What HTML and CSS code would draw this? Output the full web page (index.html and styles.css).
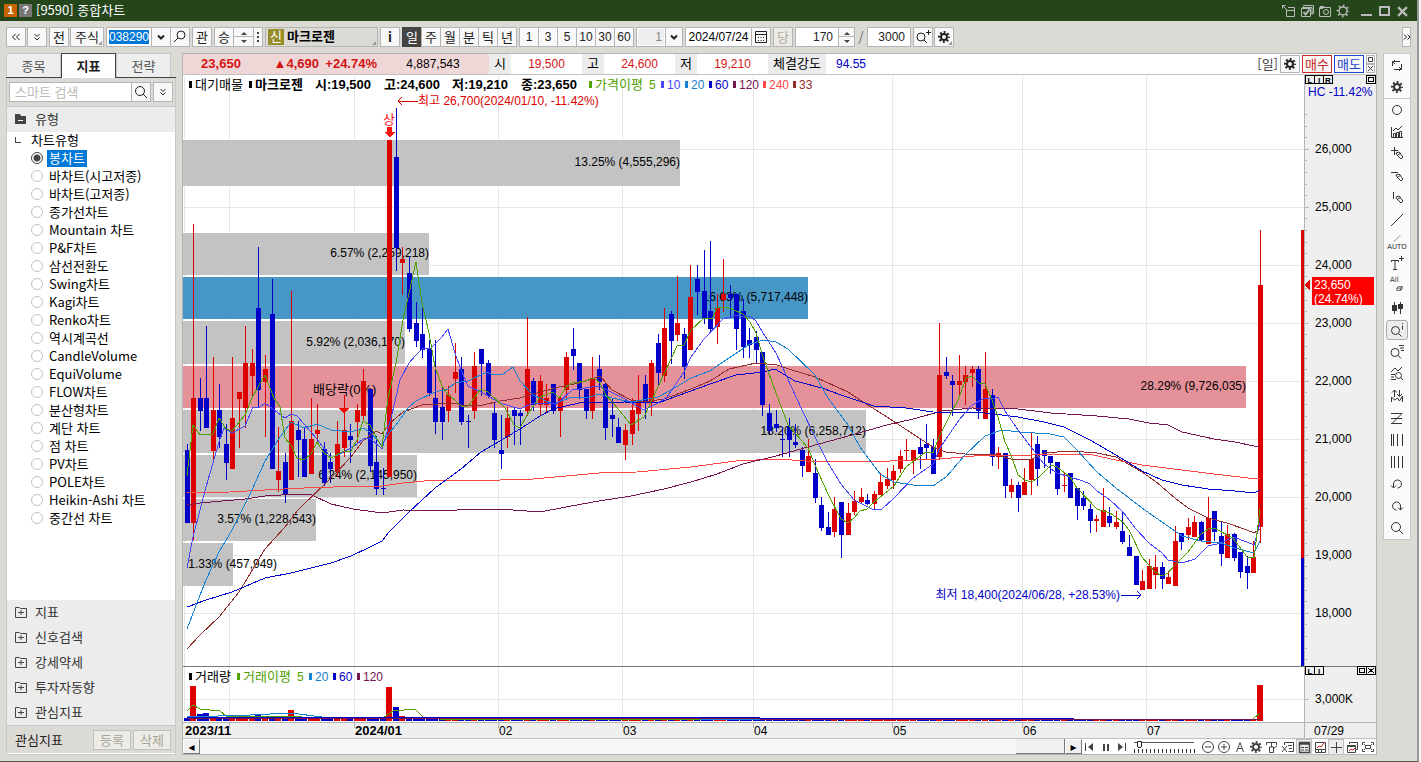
FILE: index.html
```html
<!DOCTYPE html>
<html lang="ko">
<head>
    <meta charset="UTF-8">
    <meta name="viewport" content="width=device-width, initial-scale=1.0">
    <title>[9590] 종합차트</title>
    <link rel="stylesheet" href="styles.css">
</head>
<body>
    <!-- 아이콘 -->
    <svg class="sprite" aria-hidden="true">
        <symbol id="gear" viewBox="0 0 16 16"><circle cx="8" cy="8" r="3" stroke-width="2"/><circle cx="8" cy="8" r="5" stroke-width="2" stroke-dasharray="1.96 1.967" stroke-dashoffset="1"/></symbol>
        <symbol id="gear-thin" viewBox="0 0 16 16"><circle cx="8" cy="8" r="4" stroke-width="1.500"/><circle cx="8" cy="8" r="5.500" stroke-width="2" stroke-dasharray="1.5 2.82" stroke-dashoffset=".75"/></symbol>
        <symbol id="find" viewBox="0 0 16 16"><circle cx="7" cy="7" r="4.500"/><path d="M10 10l4 4"/></symbol>
        <symbol id="find-left" viewBox="0 0 16 16"><circle cx="9" cy="6" r="4"/><path d="M6 9l-4 4"/></symbol>
        <symbol id="find-plus" viewBox="0 0 16 16"><circle cx="6" cy="8" r="4"/><path d="M9 11l3 3M13.500 1v5M11 3.500h5"/></symbol>
        <symbol id="down" viewBox="0 0 16 16"><path d="M5 6.500l3 3 3-3" stroke-width="2"/></symbol>
        <symbol id="dleft" viewBox="0 0 16 16"><path d="M7.500 5l-3 3 3 3M11.500 5l-3 3 3 3"/></symbol>
        <symbol id="dright" viewBox="0 0 16 16"><path d="M5 5.500l2.500 2.500L5 10.500M8.500 5.500L11 8l-2.500 2.500"/></symbol>
        <symbol id="ddown" viewBox="0 0 16 16"><path d="M5.500 5L8 7.500 10.500 5M5.500 8.500L8 11l2.500-2.500"/></symbol>
        <symbol id="calendar" viewBox="0 0 16 16"><path d="M2.500 2.500h11v11h-11zM2.500 5.500h11"/><path d="M5 8.500h7M5 11.500h7" stroke-dasharray="1 1.500"/></symbol>
        <symbol id="dock" viewBox="0 0 16 16"><path d="M5.500 6v7.500h8v-9H7M6 7.500h8M1.500 5.500v-3h3M2 3l4 4"/></symbol>
        <symbol id="windows" viewBox="0 0 16 16"><path d="M4.500 3.500v-1h10v8h-2M2.500 5.500h9v8h-9zM3 4.500h10v7"/><path d="M4.500 9l2 2.500 4-5" stroke-width="2"/></symbol>
        <symbol id="camera" viewBox="0 0 16 16"><path d="M2.500 4.500h11v9h-11zM3 3.500h4M3 5.500h3"/><circle cx="9" cy="9" r="2.500"/></symbol>
        <symbol id="folder-minus" viewBox="0 0 12 12"><path d="M0 1h5l1 2h5v8H0z" fill="currentColor" stroke="none"/><path d="M3 7.500h5" stroke="#fff"/></symbol>
        <symbol id="folder-plus" viewBox="0 0 12 12"><path d="M.5 1.500h4l1 1h6v9H.5zM3 6.500h6M6 4v5"/></symbol>
        <symbol id="refresh" viewBox="0 0 16 16"><path d="M3.500 9V4.500h7.500M4 5l2-2M4 5l2 2M12.500 7v5.500H5M12 12l-2-2M12 12l-2 2"/></symbol>
        <symbol id="circle" viewBox="0 0 16 16"><circle cx="8" cy="8" r="4.500"/></symbol>
        <symbol id="barline" viewBox="0 0 16 16"><path d="M2.500 3v10.500H14M4.500 13V9.500h2V13M7.500 13V8.500h2V13M10.500 13V7.500h2V13M4 7l3-3 2 2 4-4"/></symbol>
        <symbol id="pen-cross" viewBox="0 0 16 16"><path d="M5.500 1v8M2 4.500h7M7 7l3-1 4 5-2 2-4-4zM9 9l3-2"/></symbol>
        <symbol id="pen-h" viewBox="0 0 16 16"><path d="M2 4.500h7M7 7l3-1 4 5-2 2-4-4zM9 9l3-2"/></symbol>
        <symbol id="pen-v" viewBox="0 0 16 16"><path d="M4.500 2v7M7 7l3-1 4 5-2 2-4-4zM9 9l3-2"/></symbol>
        <symbol id="slash" viewBox="0 0 16 16"><path d="M2 14L14 2"/></symbol>
        <symbol id="text-plus" viewBox="0 0 16 16"><path d="M2.500 6V4.500h7V6M6 5v9M4 13.500h4M12.500 0v5M10 2.500h5"/></symbol>
        <symbol id="eraser" viewBox="0 0 16 16"><path d="M6.500 5.500l2-2h5v3l-2 2h-5zM6.500 5.500h5l2-2M11.500 5.500v3"/></symbol>
        <symbol id="candles" viewBox="0 0 16 16"><path d="M5.500 2v12M11.500 2v12"/><path d="M3 5h5v6H3zM9 4h5v5H9z" fill="currentColor" stroke="none"/></symbol>
        <symbol id="find-i" viewBox="0 0 16 16"><circle cx="6.500" cy="8.500" r="4"/><path d="M9.500 11.500l3 3M13.500 1v1M13.500 3.500v4"/></symbol>
        <symbol id="find-list" viewBox="0 0 16 16"><circle cx="6" cy="8.500" r="4"/><path d="M9 11.500l3 3M10 1.500h5M11 4h4M12 6.500h3"/></symbol>
        <symbol id="find-line" viewBox="0 0 16 16"><path d="M2 6l4-4 3 3 4-4M2 8.500h4M2 11h3M2 13.500h5"/><circle cx="9.500" cy="9.500" r="3"/><path d="M12 12l2 2"/></symbol>
        <symbol id="swap" viewBox="0 0 16 16"><path d="M5.500 9V2M3 4.500L5.500 2 8 4.500M10.500 2v6M8 6l2.500 2.500L13 6M2.500 14V9l3 3 3-2 2 3 3-5v6"/></symbol>
        <symbol id="zig" viewBox="0 0 16 16"><path d="M2 3.500h11M2 8.500h11M2 13.500h11M13 3.500L3 13.500"/></symbol>
        <symbol id="lines1" viewBox="0 0 16 16"><path d="M2.500 2v12M4.500 2v12M8.500 2v12M13.500 2v12"/></symbol>
        <symbol id="lines2" viewBox="0 0 16 16"><path d="M2.500 2v12M5.500 2v12M9.500 2v12M13.500 2v12"/></symbol>
        <symbol id="undo" viewBox="0 0 16 16"><path d="M4.500 11V8c0-2.500 2-4 4-4s4 1.500 4 4-2 4-4 4M2 9.500l2.500 2.500L7 9.500"/></symbol>
        <symbol id="redo" viewBox="0 0 16 16"><path d="M7.500 12c-2 0-4-1.500-4-4s2-4 4-4 4 1.500 4 4v4M9 9.500l2.500 2.500L14 9.500"/></symbol>
        <symbol id="first" viewBox="0 0 16 16"><path d="M3.500 4v8"/><path d="M11 4v8L6 8z" fill="currentColor" stroke="none"/></symbol>
        <symbol id="pause" viewBox="0 0 16 16"><path d="M6 5v7M10 5v7" stroke-width="2"/></symbol>
        <symbol id="last" viewBox="0 0 16 16"><path d="M11.500 4v8"/><path d="M4 4v8l5-4z" fill="currentColor" stroke="none"/></symbol>
        <symbol id="minus" viewBox="0 0 16 16"><circle cx="8" cy="8" r="5.500"/><path d="M5 8h6"/></symbol>
        <symbol id="plus" viewBox="0 0 16 16"><circle cx="8" cy="8" r="5.500"/><path d="M5 8h6M8 5v6"/></symbol>
        <symbol id="letter" viewBox="0 0 16 16"><path d="M4.500 13L8 3.500 11.500 13M6 9.500h4"/></symbol>
        <symbol id="tpaint" viewBox="0 0 16 16"><path d="M2.500 6V3.500h10V6M7.500 4v4M5.500 8h4v5.500h-4zM10 9l3-2"/></symbol>
        <symbol id="sheet-x" viewBox="0 0 16 16"><path d="M4.500 6V3.500h9v9h-5M8 6.500h4M9 9.500h3M2 7l5 6M7 7l-5 6"/></symbol>
        <symbol id="panel" viewBox="0 0 16 16"><path d="M3.500 3.500h10v10h-10zM4 5h9" stroke-width="1.500"/><path d="M5 8.500h3M5 11h3M9 8.500h3M9 11h3"/></symbol>
        <symbol id="trend" viewBox="0 0 16 16"><path d="M3.500 3.500h10v10h-10zM4 10.500h9M6.500 11v2M9.500 11v2"/><path d="M5 9l2-2 2 1 3-4" stroke="#c81e1e"/></symbol>
        <symbol id="cross" viewBox="0 0 16 16"><path d="M8.500 3v11M3 8.500h11"/></symbol>
        <symbol id="copy" viewBox="0 0 16 16"><path d="M5.500 5V3.500h8v7H12M3.500 6.500h8v7h-8zM4 7.500h7"/><path d="M5 12l2-2 2 1 2-2" stroke="#c81e1e"/></symbol>
        <symbol id="expand" viewBox="0 0 16 16"><path d="M2.500 6V3.500H5M11 3.500h2.500V6M13.500 10v2.500H11M5 12.500H2.500V10M4 5l1 1M12 5l-1 1M12 11l-1-1M4 11l1-1M5.500 6.500h5v3h-5z"/></symbol>
    </svg>

    <div class="window">
        <header class="titlebar">
            <span class="mark mark-one">1</span>
            <span class="mark mark-help">?</span>
            <h1>[9590] 종합차트</h1>
            <div class="window-tools">
                <svg class="ico"><use href="#dock"/></svg>
                <svg class="ico"><use href="#windows"/></svg>
                <svg class="ico"><use href="#camera"/></svg>
                <svg class="ico"><use href="#gear-thin"/></svg>
            </div>
            <div class="window-buttons">
                <button class="win-min" aria-label="최소화"></button>
                <button class="win-max" aria-label="최대화"></button>
                <button class="win-close" aria-label="닫기"><svg viewBox="0 0 10 10"><path d="M1 1l8 8M9 1L1 9"/></svg></button>
            </div>
        </header>

        <div class="toolbar">
            <div class="set">
                <button class="btn" aria-label="접기"><svg class="ico"><use href="#dleft"/></svg></button>
                <button class="btn" aria-label="더보기"><svg class="ico"><use href="#ddown"/></svg></button>
            </div>
            <div class="set">
                <button class="btn">전</button>
                <button class="btn wide corner">주식</button>
            </div>
            <div class="set joined">
                <div class="code-box"><input type="text" class="code" value="038290" aria-label="종목코드"></div>
                <button class="btn" aria-label="종목 목록"><svg class="ico"><use href="#down"/></svg></button>
                <button class="btn" aria-label="종목 찾기"><svg class="ico"><use href="#find-left"/></svg></button>
            </div>
            <button class="btn">관</button>
            <div class="set joined">
                <button class="btn">승</button>
                <button class="btn spin large" aria-label="위아래"></button>
                <button class="btn dots" aria-label="옵션"></button>
            </div>
            <div class="stock-name corner"><span>신</span><b>마크로젠</b></div>
            <button class="btn"><b>i</b></button>
            <div class="set joined">
                <button class="btn on">일</button>
                <button class="btn">주</button>
                <button class="btn">월</button>
                <button class="btn">분</button>
                <button class="btn">틱</button>
                <button class="btn">년</button>
            </div>
            <div class="set joined num">
                <button class="btn">1</button>
                <button class="btn">3</button>
                <button class="btn">5</button>
                <button class="btn">10</button>
                <button class="btn">30</button>
                <button class="btn">60</button>
            </div>
            <div class="set joined">
                <input type="text" class="field unit" value="1" aria-label="주기" disabled>
                <button class="btn slim" aria-label="주기 목록"><svg class="ico"><use href="#down"/></svg></button>
            </div>
            <div class="set joined">
                <input type="text" class="field date" value="2024/07/24" aria-label="날짜">
                <button class="btn" aria-label="달력"><svg class="ico"><use href="#calendar"/></svg></button>
            </div>
            <button class="btn off" disabled>당</button>
            <div class="set joined">
                <input type="text" class="field" value="170" aria-label="표시 개수">
                <button class="btn spin" aria-label="개수 조절"></button>
            </div>
            <span class="slash">/</span>
            <input type="text" class="field" value="3000" aria-label="전체 개수">
            <div class="set">
                <button class="btn" aria-label="확대"><svg class="ico"><use href="#find-plus"/></svg></button>
                <button class="btn corner" aria-label="설정"><svg class="ico"><use href="#gear"/></svg></button>
            </div>
            <button class="btn more" aria-label="도구 더보기"><svg class="ico"><use href="#dright"/></svg></button>
        </div>

        <div class="content">
            <aside class="side">
                <div class="tabs">
                    <button>종목</button>
                    <button class="active">지표</button>
                    <button>전략</button>
                </div>
                <div class="side-body">
                    <div class="search">
                        <input type="text" placeholder="스마트 검색" aria-label="스마트 검색">
                        <button class="btn" aria-label="검색"><svg class="ico"><use href="#find"/></svg></button>
                        <button class="btn gap" aria-label="펼치기"><svg class="ico"><use href="#ddown"/></svg></button>
                    </div>
                    <div class="fold first"><svg><use href="#folder-minus"/></svg>유형</div>
                    <div class="tree">
                        <div class="tree-root">차트유형</div>
                        <label><input type="radio" name="chart" checked><span>봉차트</span></label>
                        <label><input type="radio" name="chart"><span>바차트(시고저종)</span></label>
                        <label><input type="radio" name="chart"><span>바차트(고저종)</span></label>
                        <label><input type="radio" name="chart"><span>종가선차트</span></label>
                        <label><input type="radio" name="chart"><span>Mountain 차트</span></label>
                        <label><input type="radio" name="chart"><span>P&amp;F차트</span></label>
                        <label><input type="radio" name="chart"><span>삼선전환도</span></label>
                        <label><input type="radio" name="chart"><span>Swing차트</span></label>
                        <label><input type="radio" name="chart"><span>Kagi차트</span></label>
                        <label><input type="radio" name="chart"><span>Renko차트</span></label>
                        <label><input type="radio" name="chart"><span>역시계곡선</span></label>
                        <label><input type="radio" name="chart"><span>CandleVolume</span></label>
                        <label><input type="radio" name="chart"><span>EquiVolume</span></label>
                        <label><input type="radio" name="chart"><span>FLOW차트</span></label>
                        <label><input type="radio" name="chart"><span>분산형차트</span></label>
                        <label><input type="radio" name="chart"><span>계단 차트</span></label>
                        <label><input type="radio" name="chart"><span>점 차트</span></label>
                        <label><input type="radio" name="chart"><span>PV차트</span></label>
                        <label><input type="radio" name="chart"><span>POLE차트</span></label>
                        <label><input type="radio" name="chart"><span>Heikin-Ashi 차트</span></label>
                        <label><input type="radio" name="chart"><span>중간선 차트</span></label>
                    </div>
                    <div class="fold"><svg><use href="#folder-plus"/></svg>지표</div>
                    <div class="fold"><svg><use href="#folder-plus"/></svg>신호검색</div>
                    <div class="fold"><svg><use href="#folder-plus"/></svg>강세약세</div>
                    <div class="fold"><svg><use href="#folder-plus"/></svg>투자자동향</div>
                    <div class="fold"><svg><use href="#folder-plus"/></svg>관심지표</div>
                    <div class="side-foot">
                        <span>관심지표</span>
                        <button disabled>등록</button>
                        <button disabled>삭제</button>
                    </div>
                </div>
            </aside>

            <main class="panel">
                <div class="quote">
                    <div class="quote-main">
                        <b class="q-price">23,650</b>
                        <b class="q-diff">▲4,690</b>
                        <b class="q-rate">+24.74%</b>
                        <span class="q-volume">4,887,543</span>
                    </div>
                    <span class="q-label">시</span><span class="q-value">19,500</span>
                    <span class="q-label">고</span><span class="q-value">24,600</span>
                    <span class="q-label">저</span><span class="q-value">19,210</span>
                    <span class="q-label long">체결강도</span><span class="q-value blue">94.55</span>
                    <div class="quote-tools">
                        <span>[일]</span>
                        <button class="btn" aria-label="차트 설정"><svg class="ico"><use href="#gear"/></svg></button>
                        <button class="buy">매수</button>
                        <button class="sell">매도</button>
                        <div class="mini">
                            <button aria-label="크게"><svg viewBox="0 0 7 7"><path d="M1.500 1.500h4v4h-4z"/></svg></button>
                            <button aria-label="닫기"><svg viewBox="0 0 7 7"><path d="M1 1l5 5M6 1L1 6"/></svg></button>
                        </div>
                    </div>
                </div>
                <div class="plot"><svg id="chart"></svg></div>
                <div class="bottom">
                    <button class="arrow" aria-label="왼쪽">◂</button>
                    <div class="track"><div class="thumb"></div></div>
                    <button class="arrow" aria-label="오른쪽">▸</button>
                    <div class="player">
                        <svg class="ico"><use href="#first"/></svg>
                        <svg class="ico"><use href="#pause"/></svg>
                        <svg class="ico"><use href="#last"/></svg>
                        <input type="range" class="speed" min="0" max="20" value="1" aria-label="속도">
                        <svg class="ico"><use href="#minus"/></svg>
                        <svg class="ico"><use href="#plus"/></svg>
                        <svg class="ico"><use href="#letter"/></svg>
                        <svg class="ico"><use href="#gear"/></svg>
                        <svg class="ico"><use href="#tpaint"/></svg>
                        <svg class="ico"><use href="#sheet-x"/></svg>
                        <svg class="ico pressed"><use href="#panel"/></svg>
                        <svg class="ico"><use href="#trend"/></svg>
                        <svg class="ico pressed"><use href="#cross"/></svg>
                        <svg class="ico"><use href="#copy"/></svg>
                        <svg class="ico"><use href="#expand"/></svg>
                    </div>
                </div>
            </main>

            <nav class="draw-tools">
                <button aria-label="새로고침" class="top"><svg class="ico"><use href="#refresh"/></svg></button>
                <button aria-label="설정" class="group-end"><svg class="ico"><use href="#gear"/></svg></button>
                <button aria-label="원"><svg class="ico"><use href="#circle"/></svg></button>
                <button aria-label="지표"><svg class="ico"><use href="#barline"/></svg></button>
                <button aria-label="십자선"><svg class="ico"><use href="#pen-cross"/></svg></button>
                <button aria-label="수평선"><svg class="ico"><use href="#pen-h"/></svg></button>
                <button aria-label="수직선"><svg class="ico"><use href="#pen-v"/></svg></button>
                <button aria-label="추세선"><svg class="ico"><use href="#slash"/></svg></button>
                <button class="stacked"><svg class="ico short"><use href="#slash"/></svg>AUTO</button>
                <button aria-label="텍스트"><svg class="ico"><use href="#text-plus"/></svg></button>
                <button class="stacked left">All<svg class="ico short"><use href="#eraser"/></svg></button>
                <button aria-label="봉"><svg class="ico"><use href="#candles"/></svg></button>
                <button aria-label="정보" class="pressed"><svg class="ico"><use href="#find-i"/></svg></button>
                <button aria-label="목록"><svg class="ico"><use href="#find-list"/></svg></button>
                <button aria-label="패턴"><svg class="ico"><use href="#find-line"/></svg></button>
                <button aria-label="매매"><svg class="ico"><use href="#swap"/></svg></button>
                <button aria-label="지그재그"><svg class="ico"><use href="#zig"/></svg></button>
                <button aria-label="시간대"><svg class="ico"><use href="#lines1"/></svg></button>
                <button aria-label="주기선"><svg class="ico"><use href="#lines2"/></svg></button>
                <button aria-label="되돌리기"><svg class="ico"><use href="#undo"/></svg></button>
                <button aria-label="다시하기"><svg class="ico"><use href="#redo"/></svg></button>
                <button aria-label="돋보기"><svg class="ico"><use href="#find"/></svg></button>
            </nav>
        </div>
    </div>

    <script src="script.js"></script>
</body>
</html>
```
FILE: styles.css
```css
* {
    box-sizing: border-box;
}
body {
    margin: 0;
    background: #f4f4f4;
    color: #222;
    font: 13px/18px "Noto Sans CJK KR", sans-serif;
}
button, input {
    margin: 0;
    padding: 0;
    font: inherit;
    color: inherit;
    border-radius: 0;
}
button {
    cursor: pointer;
}
.sprite {
    display: none;
}
.ico {
    display: block;
    flex: none;
    width: 16px;
    height: 16px;
}
.ico, .fold svg {
    fill: none;
    stroke: currentColor;
}
.window {
    display: flex;
    flex-direction: column;
    height: 100vh;
    min-height: 720px;
    margin-right: 2px;
    background: #dcdad5;
    border-right: 2px solid #999;
    border-bottom: 1px solid #555;
}

/* Заголовок */
.titlebar {
    display: flex;
    align-items: center;
    gap: 2px;
    height: 21px;
    padding: 0 9px 0 4px;
    background: #25451b;
    color: #fff;
}
.titlebar h1 {
    margin: 0 0 0 2px;
    font-size: 13px;
    font-weight: normal;
    line-height: 16px;
    padding-bottom: 2px;
}
.mark {
    width: 13px;
    height: 13px;
    background: #c86400;
    font: bold 11px/13px "Liberation Sans", sans-serif;
    text-align: center;
}
.mark-help {
    background: #777;
}
.window-tools {
    display: flex;
    gap: 2px;
    margin-left: auto;
    color: #bbb;
}
.window-buttons {
    display: flex;
    align-items: center;
    gap: 7px;
    margin-left: 8px;
}
.window-buttons button {
    width: 11px;
    height: 10px;
    background: none;
    border: 0 solid #bbb;
}
.window-buttons .win-min {
    border-bottom-width: 2px;
}
.window-buttons .win-max {
    border-width: 2px;
}
.win-close svg {
    display: block;
    fill: none;
    stroke: #bbb;
    stroke-width: 2;
}

/* Панель инструментов */
.toolbar {
    display: flex;
    align-items: center;
    gap: 2px;
    height: 32px;
    padding: 0 6px;
}
.set {
    display: flex;
    gap: 1px;
}
.joined {
    gap: 0;
}
.joined > * + * {
    margin-left: -1px;
}
.btn {
    display: flex;
    flex: none;
    align-items: center;
    justify-content: center;
    position: relative;
    width: 20px;
    height: 20px;
    background: #f8f8f8;
    border: 1px solid #b4b4b4;
    line-height: 16px;
}
.btn.wide {
    width: 34px;
}
.btn.slim {
    width: 18px;
}
.btn.on {
    background: #444;
    border-color: #444;
    color: #fff;
}
.btn.off {
    color: #b0aca0;
    background: #ecebe6;
}
.btn.dots {
    width: 10px;
}
.btn.dots::before {
    content: "";
    width: 2px;
    height: 10px;
    background: repeating-linear-gradient(#444 0 2px, transparent 2px 4px);
}
.btn.spin {
    width: 17px;
    flex-direction: column;
    gap: 5px;
    background: linear-gradient(#f8f8f8 8px, #b4b4b4 8px, #b4b4b4 9px, #f8f8f8 9px);
}
.btn.spin.large {
    width: 21px;
}
.btn.spin::before, .btn.spin::after {
    content: "";
    border: 3px solid transparent;
    border-top: 0;
    border-bottom-color: #444;
}
.btn.spin::after {
    border-top: 3px solid #444;
    border-bottom: 0;
}
.btn.more {
    width: 9px;
    margin-left: auto;
    overflow: hidden;
}
.corner::after {
    content: "";
    position: absolute;
    right: 1px;
    bottom: 1px;
    border: 2px solid #999;
    border-left-color: transparent;
    border-top-color: transparent;
}
.num, .field, .code {
    font-family: "Liberation Sans", sans-serif;
    font-size: 12px;
}
.code-box {
    width: 46px;
    height: 20px;
    padding: 2px;
    background: #fff;
    border: 1px solid #b4b4b4;
}
.code {
    display: block;
    width: 40px;
    height: 14px;
    border: 0;
    background: #0078d7;
    color: #fff;
}
.stock-name {
    position: relative;
    display: flex;
    gap: 3px;
    width: 113px;
    height: 20px;
    padding: 1px 2px;
    border: 1px solid #b4b4b4;
    line-height: 14px;
}
.stock-name span {
    width: 16px;
    height: 16px;
    background: #968c28;
    color: #fff;
    text-align: center;
}
.stock-name b {
    color: #000;
}
.field {
    width: 44px;
    height: 20px;
    padding: 0 5px 0 0;
    background: #fff;
    border: 1px solid #b4b4b4;
    text-align: right;
}
.field.unit {
    width: 30px;
    padding-right: 2px;
    background: #eee;
    border: 2px solid #fff;
    outline: 1px solid #b4b4b4;
    outline-offset: -1px;
    color: #888;
}
.field.date {
    width: 67px;
    padding: 0;
    text-align: center;
    color: #000;
}
.slash {
    width: 8px;
    text-align: center;
    color: #666;
}

/* Основная область */
.content {
    display: flex;
    flex: 1;
    min-height: 0;
    padding: 0 6px 6px;
}
.side {
    display: flex;
    flex-direction: column;
    width: 170px;
    margin-right: 6px;
}
.tabs {
    display: flex;
    height: 25px;
    border-bottom: 1px solid #444;
}
.tabs button {
    width: 55px;
    height: 24px;
    background: #eee;
    border: 1px solid #c8c8c8;
    border-bottom: 0;
    color: #555;
}
.tabs .active {
    height: 25px;
    background: #fff;
    border-color: #444;
    color: #222;
    font-weight: bold;
}
.side-body {
    display: flex;
    flex: 1;
    flex-direction: column;
    min-height: 0;
    border: 1px solid #c8c8c8;
    border-top: 0;
}
.search {
    display: flex;
    height: 28px;
    padding: 4px 2px;
}
.search input {
    flex: 1;
    min-width: 0;
    height: 20px;
    padding: 0 5px 2px;
    border: 1px solid #b4b4b4;
    background: #fff;
}
.search input::placeholder {
    color: #bbb;
}
.search .btn {
    margin-left: -1px;
}
.search .btn.gap {
    margin-left: 2px;
}
.fold {
    display: flex;
    align-items: center;
    gap: 8px;
    height: 25px;
    padding: 0 0 2px 8px;
    background: #ececec;
    color: #333;
}
.fold svg {
    width: 12px;
    height: 12px;
    color: #444;
}
.fold.first {
    height: 26px;
    border-top: 1px solid #c8c8c8;
}
.tree {
    flex: 1;
    overflow: hidden;
    background: #fff;
    color: #000;
}
.tree-root {
    height: 17px;
    padding-left: 24px;
    line-height: 15px;
}
.tree-root::before {
    content: "";
    float: left;
    width: 5px;
    height: 5px;
    margin: 5px 0 0 -16px;
    border: solid #444;
    border-width: 0 0 1px 1px;
}
.tree label {
    display: flex;
    align-items: center;
    gap: 4px;
    height: 18px;
    padding-left: 24px;
}
.tree label span {
    padding: 0 2px 2px;
    line-height: 15px;
    white-space: nowrap;
}
.tree input {
    appearance: none;
    width: 12px;
    height: 12px;
    border: 1px solid #c0c0c0;
    border-radius: 50%;
    background: #fff;
}
.tree input:checked {
    border-color: #444;
    background: radial-gradient(#444 0 3px, #fff 4px);
}
.tree input:checked + span {
    background: #0078d7;
    color: #fff;
}
.side-foot {
    display: flex;
    align-items: center;
    gap: 2px;
    height: 29px;
    padding: 0 4px 0 8px;
    border-top: 1px solid #c8c8c8;
    border-bottom: 1px solid #fff;
}
.side-foot span {
    margin-right: auto;
}
.side-foot button {
    width: 38px;
    height: 20px;
    background: #ecebe6;
    border: 1px solid #c0c0c0;
    color: #a8a498;
    line-height: 16px;
}
.panel {
    display: flex;
    flex: 1;
    flex-direction: column;
    min-width: 0;
    border: 1px solid #b4b4b4;
    background: #fff;
}

/* Котировка */
.quote {
    display: flex;
    align-items: center;
    height: 21px;
    border-bottom: 1px solid #c0c0c0;
    font: 12px/20px "Liberation Sans", "Noto Sans CJK KR", sans-serif;
}
.quote-main {
    display: grid;
    grid-template-columns: 76px 60px 58px 112px;
    width: 306px;
    background: #f0d7d7;
    color: #d21414;
    text-align: center;
}
.quote-main b {
    font-size: 13px;
    white-space: nowrap;
}
.q-diff, .q-rate {
    text-align: right;
}
.q-volume {
    color: #000;
}
.q-label {
    width: 22px;
    background: #ececec;
    color: #000;
    font-size: 13px;
    text-align: center;
}
.q-label.long {
    width: 58px;
}
.q-value {
    width: 71px;
    color: #d21414;
    text-align: center;
}
.q-value.blue {
    width: 50px;
    color: #0000c8;
}
.quote-tools {
    display: flex;
    align-items: center;
    gap: 2px;
    margin: 0 1px 0 auto;
    font-family: "Noto Sans CJK KR", sans-serif;
    font-size: 13px;
}
.quote-tools > span {
    color: #444;
}
.quote-tools .btn {
    height: 18px;
}
.buy, .sell {
    width: 30px;
    height: 18px;
    background: #f8f8f8;
    border: 1px solid #c82828;
    color: #c82828;
    line-height: 14px;
}
.sell {
    border-color: #1e46c8;
    color: #1e46c8;
}
.mini button {
    display: block;
    width: 9px;
    height: 9px;
    background: #f8f8f8;
    border: 1px solid #b4b4b4;
}
.mini svg {
    display: block;
    fill: none;
    stroke: #444;
}

/* График */
.plot {
    flex: 1;
    min-height: 0;
}
#chart {
    display: block;
    width: 100%;
    height: 100%;
    font: 12px "Liberation Sans", "Noto Sans CJK KR", sans-serif;
    shape-rendering: crispEdges;
}
#chart .ko {
    font-size: 13px;
}
#chart .strong {
    font-size: 13px;
    font-weight: bold;
}
#chart .tiny {
    font-size: 8px;
    font-weight: bold;
}

/* Нижняя строка */
.bottom {
    display: flex;
    height: 16px;
    border-top: 1px solid #c0c0c0;
}
.arrow {
    width: 17px;
    height: 15px;
    background: #f0f0f0;
    border: 1px solid #fff;
    border-right-color: #777;
    border-bottom-color: #777;
    color: #000;
    font: 12px/10px "DejaVu Sans", sans-serif;
}
.track {
    display: flex;
    flex: 1;
    justify-content: flex-end;
    background: #f6f6f6;
}
.thumb {
    width: 49px;
    background: #f0f0f0;
    border-right: 1px solid #777;
    border-bottom: 1px solid #777;
}
.player {
    display: flex;
    color: #444;
}
.player .pressed {
    background: #ececec;
    outline: 1px solid #c0c0c0;
    outline-offset: -1px;
}
.speed {
    appearance: none;
    width: 62px;
    height: 14px;
    margin: 0 4px;
    background:
        linear-gradient(#555, #555) 0 3px / 60px 1px no-repeat,
        repeating-linear-gradient(to right, #333 0 1px, transparent 1px 4px) 0 10px / 61px 4px no-repeat;
}
.speed::-webkit-slider-thumb {
    appearance: none;
    width: 5px;
    height: 7px;
    margin-top: -4px;
    background: #fff;
    border: 1px solid #222;
    border-radius: 0 0 2px 2px;
}

/* Правая панель */
.draw-tools {
    display: flex;
    flex-direction: column;
    align-self: flex-start;
    width: 28px;
    margin-left: 6px;
    background: #fafafa;
    border: 1px solid #c8c8c8;
}
.draw-tools button {
    display: flex;
    align-items: center;
    justify-content: center;
    height: 22px;
    background: none;
    border: 0;
    color: #333;
}
.draw-tools .top {
    height: 21px;
}
.draw-tools .group-end {
    height: 24px;
    border-bottom: 1px solid #c8c8c8;
}
.draw-tools .pressed {
    height: 20px;
    margin: 1px 2px;
    background: #ececec;
    border: 1px solid #aaa;
    border-radius: 3px;
}
.draw-tools .stacked {
    flex-direction: column;
    font: 7px/8px "DejaVu Sans", sans-serif;
}
.draw-tools .left {
    align-items: flex-start;
    padding-left: 6px;
}
.ico.short {
    height: 9px;
}
.left .ico.short {
    height: 12px;
}
```
FILE: script.js
```js
const svg = document.getElementById('chart');

// Базовая сетка, в которой заданы все точки графика
const BASE = { left: 183, top: 75, width: 1193, height: 663 };
const FIRST_X = 187;
const STEP = 6.545;

const RED = '#dc0000';
const BLUE = '#0000c8';

// high, open, close, low
const candles = [
    [444,450,523,523],[224,523,398,540],[378,398,411,431],[326,398,428,428],[357,451,410,460],
    [384,410,437,448],[424,444,463,480],[357,469,418,469],[392,399,392,448],[326,408,363,428],
    [349,376,363,396],[247,308,390,407],[355,382,369,437],[279,314,469,469],[427,480,471,492],
    [453,462,495,503],[291,480,421,480],[421,430,440,477],[428,439,477,477],[398,474,439,474],
    [404,434,430,444],[442,449,483,486],[453,462,469,483],[421,472,444,477],[395,448,430,457],
    [424,436,440,463],[404,422,410,443],[369,416,381,420],[389,389,466,472],[436,462,489,495],
    [468,488,489,495],[140,477,140,477],[108,157,248,271],[247,263,259,295],[256,273,329,332],
    [302,323,341,347],[308,334,350,358],[340,349,393,396],[340,398,422,434],[386,407,422,440],
    [386,411,395,422],[343,379,372,393],[357,369,422,425],[415,421,422,448],[352,411,366,419],
    [349,349,364,396],[360,363,396,398],[402,413,440,448],[415,450,454,469],[407,437,418,448],
    [407,410,416,445],[410,413,416,445],[317,411,369,416],[378,381,405,411],[375,405,381,415],
    [384,405,398,413],[384,384,411,414],[395,411,398,437],[352,390,357,399],[328,349,356,370],
    [363,363,390,399],[389,389,411,419],[357,411,378,419],[355,369,382,390],[382,384,428,440],
    [398,415,419,437],[418,427,443,443],[424,445,430,460],[398,434,410,445],[375,414,402,431],
    [375,384,402,419],[360,402,363,416],[334,343,373,385],[308,376,328,382],[311,314,341,364],
    [276,335,323,341],[328,334,367,379],[265,350,297,350],[265,279,292,315],[250,291,318,324],
    [241,311,329,332],[294,327,308,344],[259,300,294,312],[285,294,298,318],[294,294,329,350],
    [299,311,347,358],[328,340,345,358],[331,337,350,363],[352,352,405,416],[404,413,431,434],
    [410,424,428,432],[427,439,440,457],[418,427,440,457],[424,442,445,448],[447,450,466,477],
    [439,472,456,472],[459,473,498,503],[497,505,528,531],[512,527,535,535],[497,532,509,537],
    [502,502,535,558],[503,535,513,535],[491,512,501,515],[488,502,497,504],[494,500,504,505],
    [491,504,494,510],[473,495,482,495],[468,486,479,489],[465,480,471,489],[450,469,456,473],
    [439,451,450,461],[450,461,450,474],[439,447,454,469],[424,444,448,459],[439,447,474,474],
    [323,457,375,460],[357,372,376,379],[375,381,385,416],[355,385,381,397],[366,382,375,405],
    [366,373,369,387],[366,369,411,419],[352,419,389,419],[389,395,457,466],[447,457,453,469],
    [453,453,486,498],[479,492,485,498],[482,485,498,512],[468,495,482,495],[433,480,459,495],
    [436,444,469,486],[450,450,456,468],[456,456,463,474],[462,462,489,495],[473,486,485,492],
    [473,473,498,498],[488,488,506,520],[491,498,506,510],[504,509,521,533],[515,521,519,532],
    [488,527,510,527],[507,516,523,527],[511,527,522,529],[511,531,542,544],[535,547,556,556],
    [556,556,585,585],[570,590,581,590],[559,589,566,589],[555,575,567,589],[562,567,579,589],
    [571,584,577,584],[526,586,541,586],[533,533,542,550],[518,535,527,540],[516,537,522,537],
    [521,522,540,542],[497,544,518,544],[511,511,532,541],[522,536,554,566],[525,558,534,558],
    [533,534,558,561],[552,552,572,578],[556,566,573,589],[541,573,557,573],[230,527,285,543]
];

// Скользящие средние по цене
const priceLines = [
    ['#962d2d', '187,649 200,635 219,617 239,592 265,549 285,527 298,510 331,478 351,457 363,441 376,431 382,434 389,424 403,412 422,405 455,403 461,405 483,405 500,401 520,398 533,394 559,387 579,383 600,376 612,390 631,400 644,402 664,399 691,389 710,381 729,369 756,363 777,365 792,370 815,377 848,392 860,400 887,417 913,434 933,447 946,452 965,454 997,455 1011,459 1030,460 1044,453 1070,451 1097,453 1116,457 1142,472 1155,481 1175,498 1188,508 1208,518 1227,523 1247,530 1254,533 1260,529'],
    ['#ff4646', '187,493 230,492 265,490 304,488 363,486 382,486 403,483 435,480 500,480 533,479 599,473 637,472 691,467 736,461 776,459 807,461 890,461 913,460 940,459 985,455 1031,455 1053,454 1093,455 1116,460 1142,465 1182,470 1214,474 1257,479 1260,478'],
    ['#781450', '187,505 200,503 245,499 265,496 298,494 312,495 331,504 353,509 382,513 403,510 442,511 473,509 500,509 540,512 566,507 599,501 631,496 664,489 691,482 717,474 743,464 776,456 808,447 841,438 887,425 913,419 942,411 972,408 1018,409 1051,413 1097,416 1129,419 1149,423 1168,425 1182,432 1214,439 1235,442 1254,446 1260,446'],
    ['#0000c8', '187,607 206,600 232,592 265,578 291,573 331,563 351,556 370,547 382,541 389,532 409,512 435,488 461,469 481,452 500,441 520,429 540,416 553,409 579,403 625,402 658,403 677,396 710,384 736,375 763,372 775,369 795,381 822,388 841,395 874,406 906,408 933,412 985,413 1018,417 1044,422 1064,427 1090,440 1116,455 1142,471 1162,480 1182,485 1208,489 1235,491 1254,493 1260,490'],
    ['#1482d2', '187,629 200,595 206,580 219,552 232,530 252,490 265,461 278,440 291,422 304,428 317,424 331,430 351,432 363,428 370,432 382,445 389,433 396,425 403,415 409,407 416,401 435,392 448,389 455,383 468,381 487,372 493,375 503,374 513,367 520,381 533,395 553,404 572,397 590,397 599,394 612,398 631,402 658,397 671,390 691,378 710,371 723,362 750,344 763,340 776,342 788,349 815,375 828,398 848,425 860,447 880,474 894,482 913,485 933,486 946,477 965,455 985,436 1002,430 1020,432 1050,434 1064,437 1077,450 1097,472 1116,488 1142,508 1162,522 1182,536 1201,541 1221,543 1235,548 1254,553 1260,541'],
    ['#4646fa', '187,568 193,537 200,510 206,487 219,442 224,428 232,433 245,426 253,407 260,407 265,403 274,410 285,418 291,414 297,416 317,439 331,458 344,452 357,444 363,439 370,438 382,449 391,418 400,380 409,363 416,355 422,349 431,348 442,337 448,329 455,353 461,370 468,386 483,393 500,403 520,409 533,403 557,404 572,390 599,386 623,398 644,410 658,403 667,397 684,372 691,357 704,339 723,319 737,315 743,317 750,316 756,321 763,333 776,353 787,377 802,410 815,437 828,463 841,484 854,500 874,510 882,509 894,498 913,478 933,464 940,448 959,420 972,405 985,398 992,399 998,397 1005,411 1018,430 1031,447 1044,464 1057,473 1083,481 1090,484 1097,491 1110,500 1123,512 1136,529 1149,543 1162,553 1168,560 1182,563 1195,559 1208,546 1221,543 1233,537 1247,542 1254,545 1260,523'],
    ['#50a000', '187,476 193,425 200,435 213,434 219,418 226,429 232,431 245,415 252,398 259,385 265,375 274,398 280,407 285,438 291,445 297,458 304,460 311,454 317,442 324,453 331,458 344,451 351,451 357,440 363,421 370,425 376,437 382,447 388,398 396,363 403,320 416,262 422,303 429,333 435,367 442,386 448,395 455,400 461,406 468,406 475,397 481,389 488,392 505,408 514,425 520,428 527,415 540,397 553,392 559,398 566,387 572,383 586,381 594,378 600,383 606,395 619,410 631,425 644,417 658,387 671,359 677,346 684,345 691,330 704,318 712,319 717,308 727,307 743,314 750,322 756,333 763,357 776,393 788,425 808,448 815,465 828,494 841,519 848,523 854,518 860,511 867,509 874,502 894,486 906,467 926,452 933,453 939,437 950,415 959,398 966,378 972,376 979,383 985,384 992,400 998,417 1005,442 1011,455 1018,475 1025,480 1031,482 1038,478 1051,465 1057,467 1070,477 1077,488 1097,509 1110,513 1123,522 1129,530 1142,557 1155,572 1162,576 1168,573 1175,565 1188,552 1201,534 1208,529 1214,528 1233,538 1247,557 1254,558 1260,509']
];

const volumeLines = [
    ['#50a000', '187,711 193,705 200,709 220,711 226,716 290,716 327,719 383,718 393,711 415,709 423,717 440,719 1253,719 1260,713'],
    ['#1482d2', '187,717 250,715 291,713 322,717 395,717 440,718 700,719 1260,719'],
    ['#0000c8', '187,717 387,717 500,717 760,718 1074,718'],
    ['#781450', '187,718 387,718 760,719 1260,719']
];

// Объёмы выше обычного
const volumes = { 1: 686, 2: 714, 3: 713, 4: 717, 7: 717, 9: 717, 11: 715, 13: 717, 16: 710, 31: 687, 32: 707, 33: 716, 34: 717, 164: 685 };

// Объём по ценам: верх, низ, правый край, подпись, цвет
const profile = [
    [140, 186, 680, '13.25% (4,555,296)', '#c3c3c3'],
    [233, 275, 429, '6.57% (2,259,218)', '#c3c3c3'],
    [277, 319, 808, '16.63% (5,717,448)', '#4696c6'],
    [321, 364, 405, '5.92% (2,036,170)', '#c3c3c3'],
    [366, 408, 1246, '28.29% (9,726,035)', '#e49199'],
    [410, 453, 866, '18.20% (6,258,712)', '#c3c3c3'],
    [455, 497, 417, '6.24% (2,145,950)', '#c3c3c3'],
    [499, 541, 316, '3.57% (1,228,543)', '#c3c3c3'],
    [543, 586, 233, '1.33% (457,949)', '#c3c3c3']
];

const months = [[229, ''], [354, ''], [498, '02'], [622, '03'], [753, '04'], [892, '05'], [1022, '06'], [1146, '07']];

let kx = 1;
let ky = 1;
let out = [];

function X(x) {
    return Math.round((x - BASE.left) * kx);
}

function Y(y) {
    return Math.round((y - BASE.top) * ky);
}

function rect(x1, y1, x2, y2, fill) {
    out.push(`<rect x="${X(x1)}" y="${Y(y1)}" width="${Math.max(1, X(x2) - X(x1))}" height="${Math.max(1, Y(y2) - Y(y1))}" fill="${fill}"/>`);
}

function text(x, y, value, color, cls = '', anchor = 'start') {
    out.push(`<text x="${X(x)}" y="${Y(y)}" fill="${color}" class="${cls}" text-anchor="${anchor}">${value}</text>`);
}

function polyline(points, color) {
    const scaled = points.split(' ').map(p => {
        const [x, y] = p.split(',').map(Number);
        return `${X(x)},${Y(y)}`;
    }).join(' ');
    out.push(`<polyline points="${scaled}" fill="none" stroke="${color}"/>`);
}

function polygon(points, color) {
    out.push(`<polygon points="${points.map(p => X(p[0]) + ',' + Y(p[1])).join(' ')}" fill="${color}"/>`);
}

// Маленькая рамка с буквой или значком
function box(x, y, label) {
    out.push(`<rect x="${X(x) + 0.5}" y="${Y(y) + 0.5}" width="9" height="8" fill="#efefef" stroke="#000"/>`);
    if (label === 'max') {
        out.push(`<rect x="${X(x) + 2.5}" y="${Y(y) + 2.5}" width="5" height="4" fill="none" stroke="#000"/>`);
    } else if (label === 'x') {
        out.push(`<path d="M${X(x) + 2} ${Y(y) + 2}l6 5m0 -5l-6 5" stroke="#000"/>`);
    } else {
        text(x + 5, y + 8, label, '#000', 'tiny', 'middle');
    }
}

function drawGrid() {
    rect(1304, 75, 1376, 723, '#efefef');
    rect(183, 723, 1376, 738, '#efefef');
    for (let y = 149; y <= 613; y += 58) {
        rect(184, y, 1304, y + 1, '#e6e6e6');
    }
    rect(184, 699, 1304, 700, '#e6e6e6');
    rect(184, 76, 185, 722, '#e6e6e6');
    months.forEach(([x]) => rect(x, 76, x + 1, 722, '#e6e6e6'));
}

function drawProfile() {
    profile.forEach(([top, bottom, right, label, color]) => rect(183, top, right, bottom, color));
    profile.forEach(([top, bottom, right, label]) => {
        text(Math.max(right, 277), (top + bottom) / 2 + 3, label, '#000', '', 'end');
    });
    text(313, 394, '배당락(0%)', '#000', 'ko');
}

function drawCandles() {
    candles.forEach(([high, open, close, low], i) => {
        const x = Math.floor(FIRST_X + i * STEP);
        const color = close < open ? RED : BLUE;
        const top = Math.min(open, close);
        rect(x, high, x + 1, low, color);
        rect(x - 2, top, x + 3, Math.max(open, close), color);
        rect(x - 3, volumes[i] || (i < 60 ? 718 : 719), x + 3, 721, color);
    });
}

function drawAxis() {
    rect(1304, 75, 1305, 738, '#b4b4b4');
    rect(183, 722, 1376, 723, '#b4b4b4');
    rect(183, 666, 1376, 667, '#777');
    for (let i = 0; i < 48; i++) {
        const y = 114 + i * 11.6;
        if (y < 664) rect(1305, y, 1307, y + 1, '#b4b4b4');
    }
    for (let y = 149, price = 26; y <= 613; y += 58, price--) {
        rect(1305, y, 1309, y + 1, '#b4b4b4');
        text(1315, y + 4, price + ',000', '#000');
    }
    rect(1305, 699, 1309, 700, '#b4b4b4');
    text(1315, 703, '3,000K', '#000');
    text(1314, 735, '07/29', '#000');
    rect(1301, 230, 1304, 558, RED);
    rect(1301, 558, 1304, 666, BLUE);

    text(185, 735, '2023/11', '#000', 'strong');
    text(355, 735, '2024/01', '#000', 'strong');
    months.forEach(([x, label]) => {
        rect(x, 723, x + 1, 728, '#b4b4b4');
        text(x + 1, 735, label, '#000');
    });

    // Текущая цена
    rect(1312, 277, 1374, 305, '#ff0000');
    polygon([[1304, 285], [1310, 280], [1310, 291]], RED);
    text(1314, 289, '23,650', '#fff');
    text(1314, 303, '(24.74%)', '#fff');

    box(1305, 75, 'L');
    box(1314, 75, 'I');
    box(1323, 75, 'R');
    box(1366, 75, 'max');
    text(1308, 96, 'HC -11.42%', BLUE);
    box(1305, 666, 'L');
    box(1314, 666, 'I');
    box(1357, 666, 'max');
    box(1366, 666, 'x');
}

function legend(x, y, label, color, cls) {
    rect(x, y - 8, x + 3, y - 1, color);
    text(x + 6, y, label, color, cls);
}

function drawLegends() {
    legend(189, 89, '대기매물', '#000', 'ko');
    legend(249, 89, '마크로젠', '#000', 'strong');
    text(315, 89, '시:19,500', '#000', 'strong');
    text(384, 89, '고:24,600', '#000', 'strong');
    text(452, 89, '저:19,210', '#000', 'strong');
    text(521, 89, '종:23,650', '#000', 'strong');
    legend(589, 89, '가격이평', '#50a000', 'ko');
    text(649, 89, '5', '#50a000');
    legend(661, 89, '10', '#4646fa');
    legend(685, 89, '20', '#1482d2');
    legend(709, 89, '60', '#0000c8');
    legend(733, 89, '120', '#781450');
    legend(763, 89, '240', '#ff4646');
    legend(793, 89, '33', '#962d2d');

    legend(189, 681, '거래량', '#000', 'ko');
    legend(237, 681, '거래이평', '#50a000', 'ko');
    text(297, 681, '5', '#50a000');
    legend(309, 681, '20', '#1482d2');
    legend(333, 681, '60', '#0000c8');
    legend(357, 681, '120', '#781450');
}

function drawMarks() {
    // Максимум и минимум
    rect(398, 101, 418, 102, RED);
    polyline('402,97 398,101 402,105', RED);
    text(418, 105, '최고 26,700(2024/01/10, -11.42%)', RED);
    text(1120, 599, '최저 18,400(2024/06/28, +28.53%)', BLUE, '', 'end');
    rect(1121, 595, 1141, 596, BLUE);
    polyline('1137,591 1141,595 1137,599', BLUE);

    text(383, 124, '상', '#ff1414', 'ko');
    rect(387, 127, 392, 132, '#ff1414');
    polygon([[384, 132], [395, 132], [389.5, 138]], '#ff1414');
    polygon([[338, 408], [349, 408], [343.5, 414]], '#ff0000');
}

function draw() {
    const size = svg.getBoundingClientRect();
    kx = size.width / BASE.width;
    ky = size.height / BASE.height;
    out = [];
    drawGrid();
    drawProfile();
    drawCandles();
    priceLines.forEach(([color, points]) => polyline(points, color));
    volumeLines.forEach(([color, points]) => polyline(points, color));
    drawAxis();
    drawLegends();
    drawMarks();
    svg.innerHTML = out.join('');
}

draw();
window.addEventListener('resize', draw);
```
